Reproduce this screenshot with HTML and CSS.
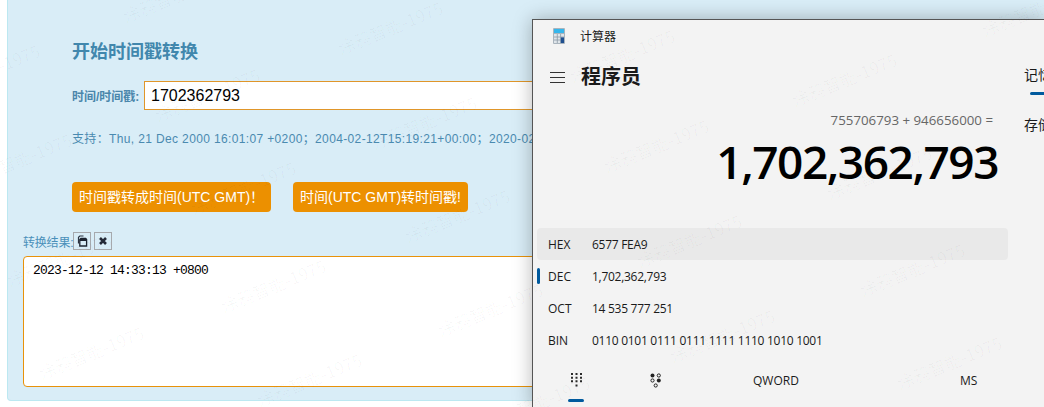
FILE: index.html
```html
<!DOCTYPE html>
<html lang="zh">
<head>
<meta charset="utf-8">
<title>时间戳转换</title>
<link rel="stylesheet" href="styles.css">
</head>
<body>
<main class="panel">
  <section class="form">
    <h2 class="title">开始时间戳转换</h2>
    <div class="field">
      <label class="field-label">时间/时间戳:</label>
      <div class="input">1702362793</div>
    </div>
    <p class="hint">支持&#xFF1A;Thu, 21 Dec 2000 16:01:07 +0200&#xFF1B;2004-02-12T15:19:21+00:00&#xFF1B;2020-02-12T15:19:21</p>
    <div class="actions">
      <button class="btn btn-a">时间戳转成时间(UTC GMT)&#xFF01;</button>
      <button class="btn btn-b">时间(UTC GMT)转时间戳!</button>
    </div>
  </section>
  <section class="result">
    <div class="result-head">
      <span class="result-label">转换结果:</span>
      <span class="tool">
        <svg width="12" height="12" viewBox="0 0 12 12"><path d="M2.500 8.500V2.200L3.800 1H7.500" fill="none" stroke="#2b3240" stroke-width="1.200"/><path d="M3.800 4.500L5 3.400H9.600L10.600 4.500V11H3.800Z" fill="none" stroke="#1d2430" stroke-width="1.300"/><rect x="4" y="3.600" width="6.400" height="2.400" fill="#1d2430"/></svg>
      </span>
      <span class="tool">
        <svg width="10" height="10" viewBox="0 0 10 10"><path d="M2 2L8 8M8 2L2 8" stroke="#252b38" stroke-width="2.600"/></svg>
      </span>
    </div>
    <div class="output">2023-12-12 14:33:13 +0800</div>
  </section>
</main>

<aside class="calc">
  <header class="calc-titlebar">
    <svg class="calc-icon" width="12" height="16" viewBox="0 0 12 16">
      <rect x="0" y="0" width="12" height="16" rx="1" fill="#a9b4bd"/>
      <rect x="1" y="1" width="10" height="4" fill="#35b6ec"/>
      <rect x="1" y="6" width="10" height="9" fill="#dfe5ea"/>
      <path d="M1 9H11M1 12H11M4.300 6V15M7.600 6V15" stroke="#8a99a6" stroke-width=".8"/>
      <rect x="7.800" y="9.400" width="3.200" height="5.600" fill="#1e4f8f"/>
    </svg>
    <span class="calc-name">计算器</span>
  </header>
  <div class="calc-body">
    <div class="calc-main">
      <div class="calc-mode">
        <span class="burger"><i></i><i></i><i></i></span>
        <span class="mode-name">程序员</span>
      </div>
      <div class="expr">755706793 + 946656000 =</div>
      <div class="big">1,702,362,793</div>
      <ul class="radix">
        <li class="radix-row radix-hover"><span class="radix-name">HEX</span><span class="radix-value">6577 FEA9</span></li>
        <li class="radix-row radix-active"><span class="radix-name">DEC</span><span class="radix-value">1,702,362,793</span></li>
        <li class="radix-row"><span class="radix-name">OCT</span><span class="radix-value">14 535 777 251</span></li>
        <li class="radix-row"><span class="radix-name">BIN</span><span class="radix-value">0110 0101 0111 0111 1111 1110 1010 1001</span></li>
      </ul>
      <div class="calc-tabs">
        <span class="tab tab-keys">
          <svg width="12" height="15" viewBox="0 0 12 15" fill="#2a2a2a"><path d="M0 0h2v2H0zM4.500 0h2v2h-2zM9 0h2v2H9zM0 3.700h2v2H0zM4.500 3.700h2v2h-2zM9 3.700h2v2H9zM0 7.300h2v2H0zM4.500 7.300h2v2h-2zM9 7.300h2v2H9zM4.500 11.500h2v2h-2z"/></svg>
        </span>
        <span class="tab tab-bits">
          <svg width="12" height="15" viewBox="0 0 12 15"><circle cx="2.500" cy="2.500" r="2" fill="#222"/><circle cx="8.800" cy="2.500" r="1.600" fill="none" stroke="#222"/><circle cx="2.500" cy="7.500" r="1.600" fill="none" stroke="#222"/><circle cx="8.800" cy="7.500" r="2" fill="#222"/><circle cx="5.700" cy="12.500" r="1.600" fill="none" stroke="#222"/></svg>
        </span>
        <span class="tab tab-word">QWORD</span>
        <span class="tab tab-ms">MS</span>
      </div>
    </div>
    <div class="calc-side">
      <div class="side-tab">记忆</div>
      <div class="side-bar"></div>
      <div class="side-note">存储</div>
    </div>
  </div>
</aside>

<svg class="watermark" width="1044" height="407" viewBox="0 0 1044 407">
  <g class="wm">
    <text transform="translate(126 23) rotate(-22)">涂鸦智能-1975</text>
    <text transform="translate(341 55) rotate(-22)">涂鸦智能-1975</text>
    <text transform="translate(573 83) rotate(-22)">涂鸦智能-1975</text>
    <text transform="translate(795 107) rotate(-22)">涂鸦智能-1975</text>
    <text transform="translate(985 37) rotate(-22)">涂鸦智能-1975</text>
    <text transform="translate(-62 98) rotate(-22)">涂鸦智能-1975</text>
    <text transform="translate(158 122) rotate(-22)">涂鸦智能-1975</text>
    <text transform="translate(375 150) rotate(-22)">涂鸦智能-1975</text>
    <text transform="translate(607 173) rotate(-22)">涂鸦智能-1975</text>
    <text transform="translate(830 200) rotate(-22)">涂鸦智能-1975</text>
    <text transform="translate(-30 187) rotate(-22)">涂鸦智能-1975</text>
    <text transform="translate(194 215) rotate(-22)">涂鸦智能-1975</text>
    <text transform="translate(408 243) rotate(-22)">涂鸦智能-1975</text>
    <text transform="translate(640 268) rotate(-22)">涂鸦智能-1975</text>
    <text transform="translate(863 297) rotate(-22)">涂鸦智能-1975</text>
    <text transform="translate(10 287) rotate(-22)">涂鸦智能-1975</text>
    <text transform="translate(224 313) rotate(-22)">涂鸦智能-1975</text>
    <text transform="translate(441 337) rotate(-22)">涂鸦智能-1975</text>
    <text transform="translate(673 363) rotate(-22)">涂鸦智能-1975</text>
    <text transform="translate(900 390) rotate(-22)">涂鸦智能-1975</text>
    <text transform="translate(42 380) rotate(-22)">涂鸦智能-1975</text>
    <text transform="translate(260 407) rotate(-22)">涂鸦智能-1975</text>
    <text transform="translate(488 430) rotate(-22)">涂鸦智能-1975</text>
  </g>
</svg>
</body>
</html>
```

FILE: styles.css
```css
* { box-sizing: border-box; }
html, body { margin: 0; height: 407px; overflow: hidden; background: #fff; }
body { position: relative; font-family: "Liberation Sans", "Noto Sans CJK SC", sans-serif; }

.panel {
  width: 1060px;
  height: 401px;
  margin-left: 7px;
  background: #d9edf7;
  border: 1px solid #bce8f1;
  border-top: 0;
  border-radius: 0 0 4px 4px;
  padding: 40px 0 0 15px;
}
.form { padding-left: 49px; }
.title { margin: 0; font-size: 18px; line-height: 24px; font-weight: 700; color: #4187ad; }
.field { display: flex; align-items: center; margin-top: 17px; }
.field-label { width: 72px; font-size: 12px; font-weight: 700; color: #4a86ab; white-space: nowrap; }
.input {
  width: 700px;
  height: 29px;
  padding-left: 6px;
  background: #fff;
  border: 1px solid #e0962a;
  font-size: 16px;
  line-height: 27px;
  color: #000;
}
.hint { margin: 20px 0 0; font-size: 12px; line-height: 18px; letter-spacing: .36px; color: #4a8ab0; white-space: nowrap; }
.actions { display: flex; gap: 22px; margin-top: 34px; }
.btn {
  height: 30px;
  padding: 0 0 0 7px;
  background: #ec9000;
  border: 0;
  border-radius: 4px;
  color: #fff;
  font: 14px/30px "Liberation Sans", "Noto Sans CJK SC", sans-serif;
  text-align: left;
  white-space: nowrap;
}
.btn-a { width: 199px; }
.btn-b { width: 175px; }

.result-head { display: flex; align-items: center; gap: 3px; margin-top: 20px; height: 18px; }
.result-label { width: 50px; margin-right: -3px; font-size: 12px; letter-spacing: -.2px; color: #4a90ba; white-space: nowrap; }
.tool {
  display: flex;
  align-items: center;
  justify-content: center;
  width: 18px;
  height: 18px;
  border: 1px solid #a6a9ad;
}
.output {
  width: 1000px;
  height: 131px;
  margin-top: 6px;
  padding: 5px 9px;
  background: #fff;
  border: 1px solid #e8920a;
  border-radius: 4px;
  font: 13px/17px "Liberation Mono", monospace;
  letter-spacing: -.8px;
  color: #000;
}

.calc {
  position: absolute;
  left: 532px;
  top: 19px;
  right: -2px;
  bottom: -2px;
  background: #f3f3f3;
  border: 1px solid #555;
  box-shadow: 0 0 18px rgba(0, 0, 0, .28);
  font-family: "Open Sans", "Noto Sans CJK SC", sans-serif;
  color: #1a1a1a;
}
.calc-titlebar { display: flex; align-items: center; height: 32px; padding: 0 0 0 20px; }
.calc-icon { margin-right: 15px; }
.calc-name { font-size: 12px; }
.calc-body { display: flex; }
.calc-main { width: 491px; flex: none; }
.calc-mode { display: flex; align-items: center; height: 50px; padding-left: 17px; }
.burger { display: flex; flex-direction: column; gap: 4px; width: 15px; margin-right: 16px; }
.burger i { display: block; height: 1px; background: #333; }
.mode-name { font-size: 20px; font-weight: 700; line-height: 28px; }
.expr { margin-top: 8px; padding-right: 31px; text-align: right; font-size: 13.300px; line-height: 20px; color: #666; }
.big {
  margin-top: 5px;
  padding-right: 26px;
  text-align: right;
  font-size: 46px;
  line-height: 52px;
  font-weight: 600;
  letter-spacing: -1.450px;
  color: #000;
}
.radix { list-style: none; margin: 41px 0 0 4px; padding: 0; width: 471px; }
.radix-row {
  position: relative;
  display: flex;
  align-items: center;
  height: 32px;
  padding-left: 11px;
  font-size: 12px;
  border-radius: 4px;
}
.radix-name { width: 44px; }
.radix-value { letter-spacing: -.28px; }
.radix-hover { background: #e9e9e9; }
.radix-active::before {
  content: "";
  position: absolute;
  left: 0;
  top: 8px;
  width: 3px;
  height: 16px;
  border-radius: 2px;
  background: #005a9e;
}
.calc-tabs { position: relative; display: flex; align-items: center; height: 46px; padding-top: 3px; font-size: 12px; }
.tab { display: flex; align-items: center; }
.tab-keys { margin-left: 38px; width: 79px; }
.tab-bits { width: 103px; }
.tab-word { width: 207px; }
.tab-keys::after {
  content: "";
  position: absolute;
  left: 35px;
  bottom: 0;
  width: 16px;
  height: 3px;
  border-radius: 2px;
  background: #005a9e;
}

.calc-side { margin-left: 0; padding: 9px 0 0 0; width: 30px; font-size: 14px; white-space: nowrap; overflow: hidden; }
.side-tab { line-height: 28px; }
.side-bar { width: 16px; height: 3px; margin: 3px 0 0 6px; background: #005a9e; border-radius: 2px 0 0 2px; }
.side-note { margin-top: 20px; line-height: 20px; }

.watermark { position: absolute; left: 0; top: 0; pointer-events: none; }
.wm { font-family: "Noto Sans CJK SC", sans-serif; font-size: 17px; fill: #000; fill-opacity: .032; }
```
